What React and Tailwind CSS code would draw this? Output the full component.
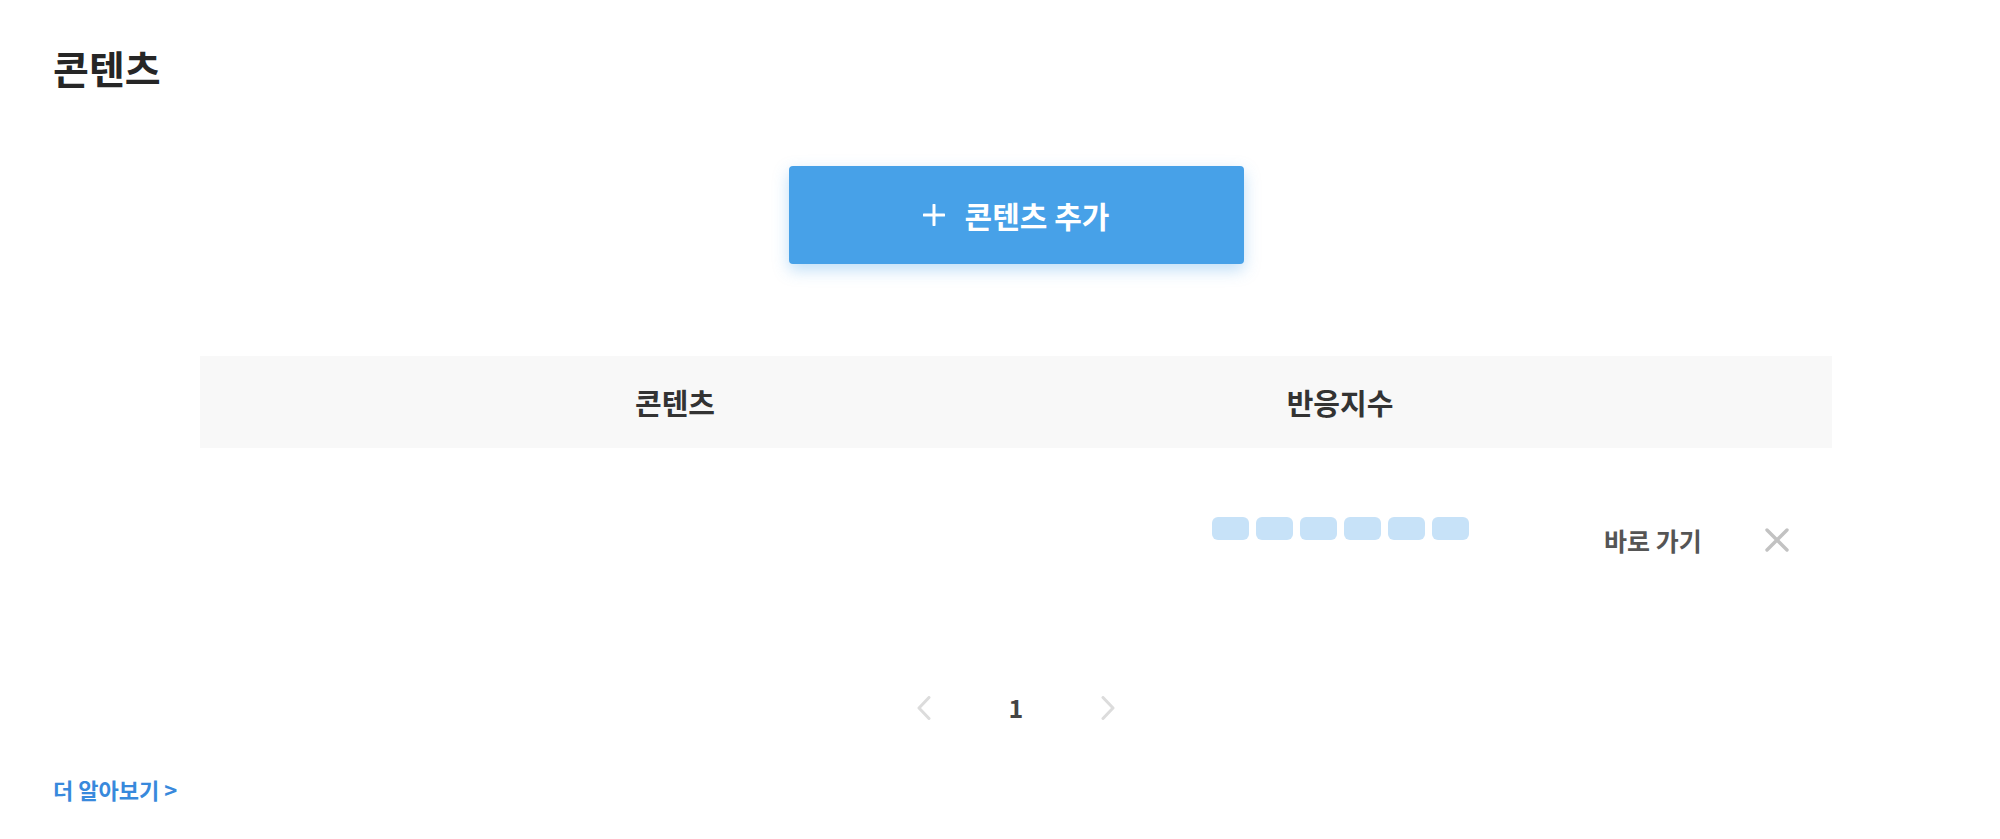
import React from 'react'

const font = "font-['Noto_Sans_CJK_KR','Noto_Sans',sans-serif]"

const Bars = ({ count }) => (
  <div className="flex gap-[7px]">
    {Array.from({ length: count }).map((_, i) => (
      <div key={i} className="w-[37px] h-[23px] rounded-[6px] bg-[#c7e2f8]" />
    ))}
  </div>
)

const Chevron = ({ dir }) => (
  <svg width="14" height="24" viewBox="0 0 14 24" fill="none">
    <path
      d={dir === 'left' ? 'M12 1.5L2 12l10 10.5' : 'M2 1.5L12 12 2 22.5'}
      stroke="#dcdcdc"
      strokeWidth="3"
      strokeLinecap="round"
      strokeLinejoin="round"
    />
  </svg>
)

const App = () => {
  return (
    <div className={`${font} bg-white min-h-[839px] px-[53px] pt-[48px]`}>
      <h1 className="text-[39px] leading-none font-bold text-[#262626]">콘텐츠</h1>

      <div className="ml-[147px] w-[1632px]">
        <div className="flex justify-center mt-[79px]">
          <button className="w-[455px] h-[98px] rounded-[4px] bg-[#47a1e8] shadow-[0_6px_16px_rgba(71,161,232,0.35)] flex items-center justify-center text-white text-[30px] font-bold leading-none">
            <svg width="22" height="22" viewBox="0 0 22 22" className="mr-[20px]">
              <path d="M11 1v20M1 11h20" stroke="#fff" strokeWidth="3" strokeLinecap="round" />
            </svg>
            <span>콘텐츠 추가</span>
          </button>
        </div>

        <div className="mt-[92px] h-[92px] bg-[#f8f8f8] flex items-center text-[29px] font-semibold text-[#333] leading-none">
          <div className="w-[950px] text-center">콘텐츠</div>
          <div className="w-[380px] text-center">반응지수</div>
          <div className="flex-1" />
        </div>

        <div className="h-[200px] flex items-start">
          <div className="w-[950px]" />
          <div className="w-[380px] flex justify-center pt-[69px]">
            <Bars count={6} />
          </div>
          <div className="flex-1 flex items-center pt-[79px] pl-[74px]">
            <span className="text-[25px] font-semibold text-[#555] leading-none">바로 가기</span>
            <svg width="26" height="26" viewBox="0 0 26 26" className="ml-[62px]">
              <path d="M3 3l20 20M23 3L3 23" stroke="#c2c2c2" strokeWidth="3.4" strokeLinecap="round" />
            </svg>
          </div>
        </div>

        <div className="mt-[47px] flex justify-center items-center">
          <div className="w-[92px] flex justify-center"><Chevron dir="left" /></div>
          <div className="w-[92px] flex justify-center text-[25px] font-bold text-[#444] leading-none">1</div>
          <div className="w-[92px] flex justify-center"><Chevron dir="right" /></div>
        </div>
      </div>

      <a className="block mt-[58px] text-[22px] font-bold text-[#3889dc] leading-none">더 알아보기 &gt;</a>
    </div>
  )
}

export default App
